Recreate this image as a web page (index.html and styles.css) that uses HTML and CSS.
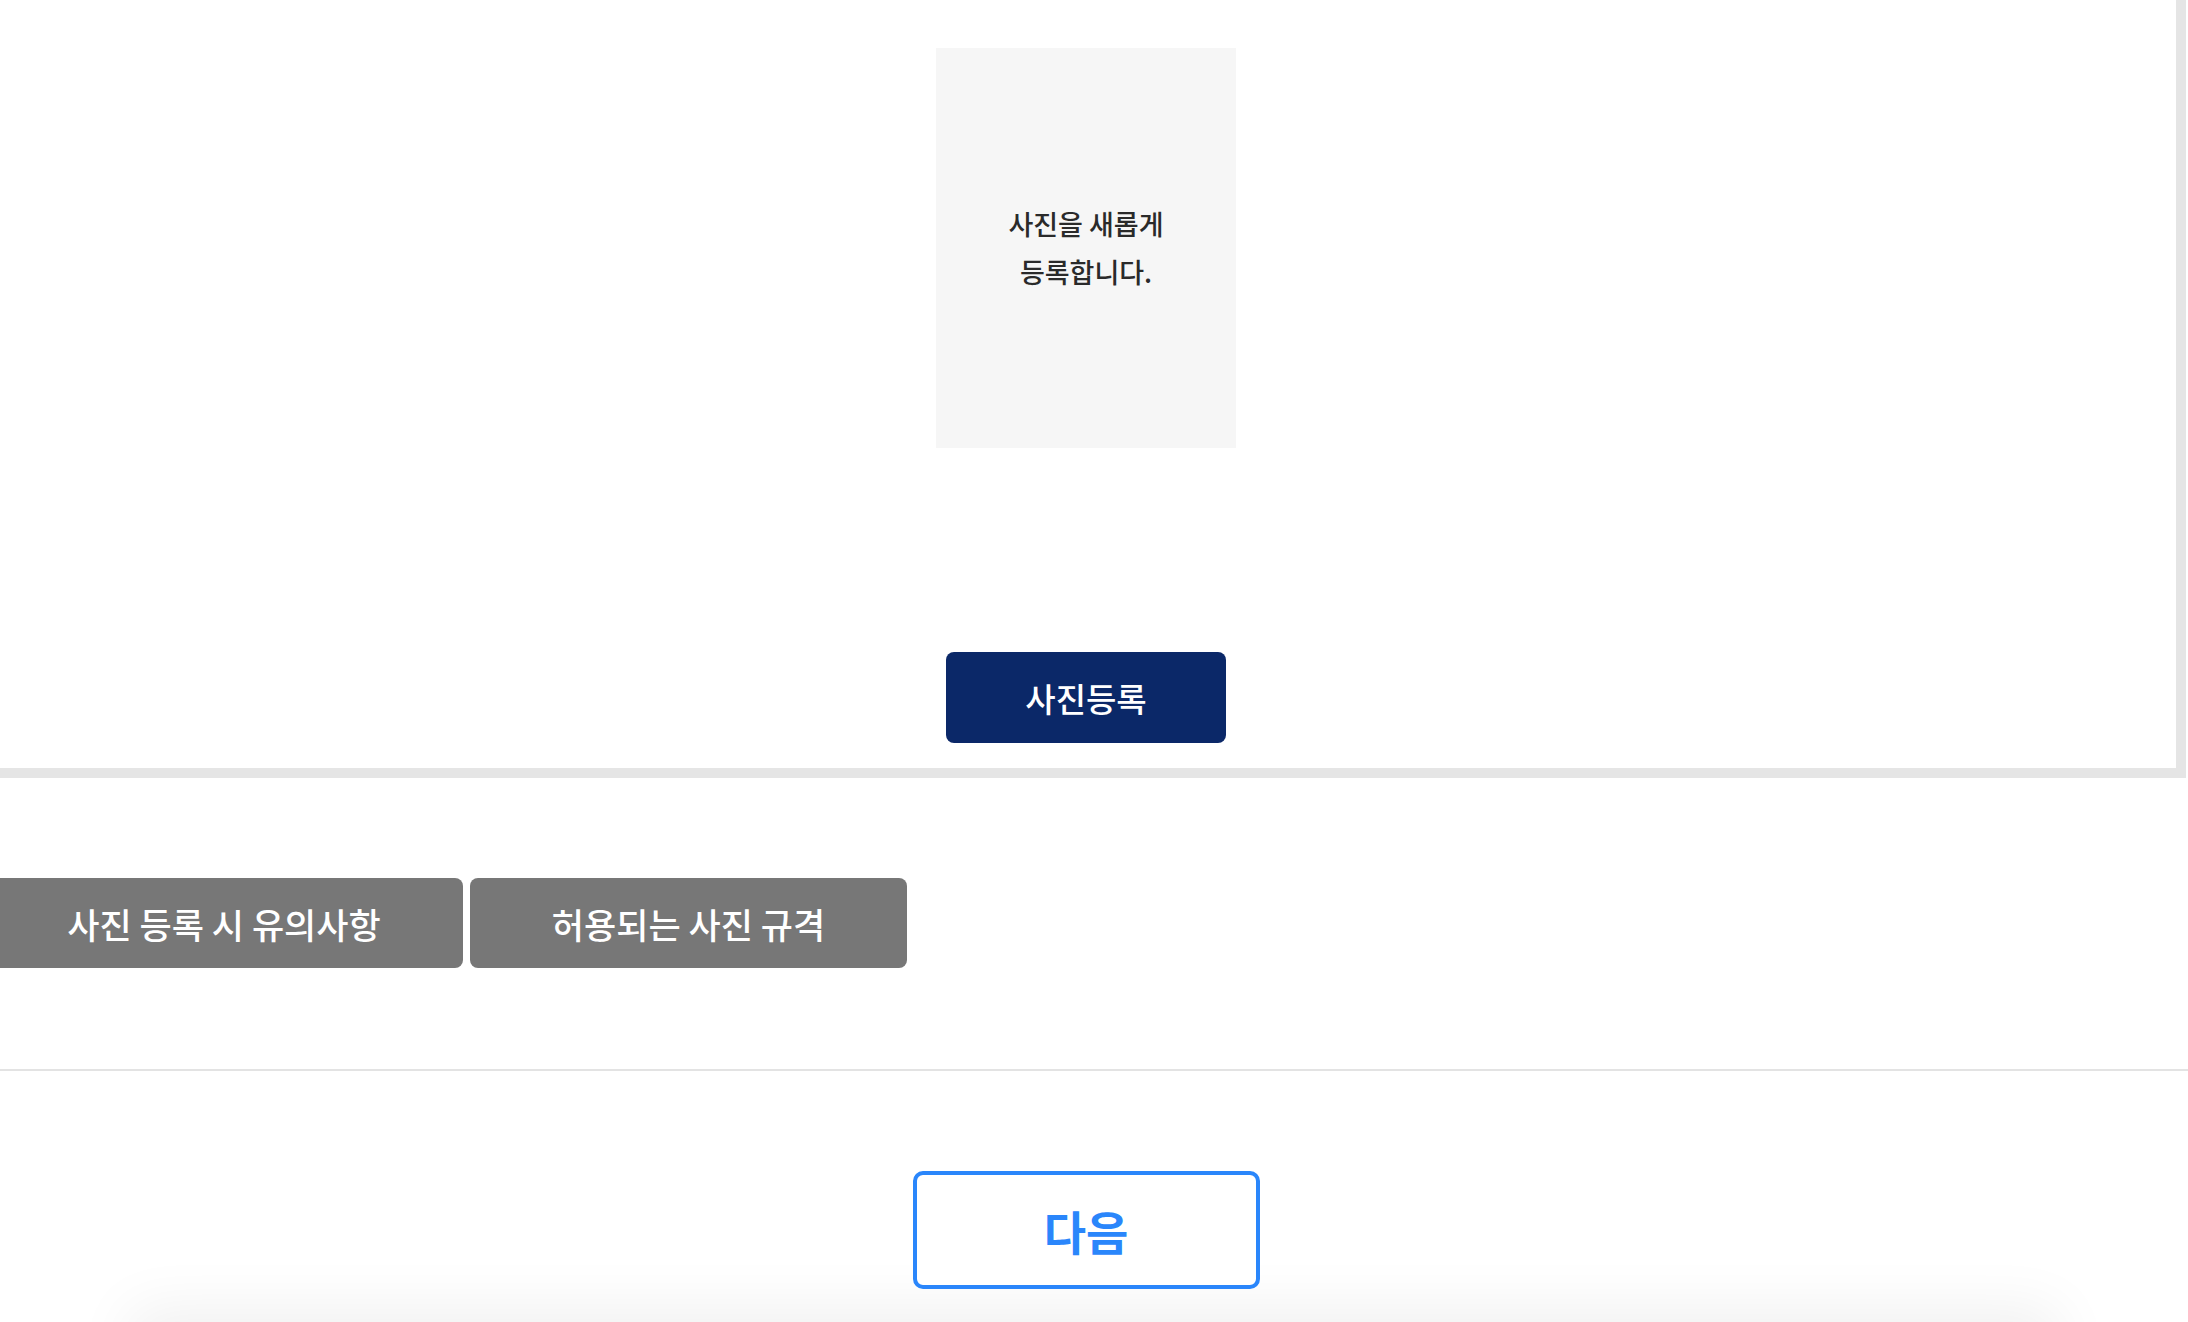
FILE: index.html
```html
<!DOCTYPE html>
<html>
<head>
    <title>사진등록</title>
    <link rel="stylesheet" href="styles.css">
</head>
<body>
    <div id="photo_container">
        <div class="photo_box">
            <p>사진을 새롭게<br>등록합니다.</p>
        </div>
        <button class="register-btn">사진등록</button>
    </div>

    <!-- Guide buttons -->
    <div class="guide_div">
        <button class="guide-btn wide">사진 등록 시 유의사항</button>
        <button class="guide-btn">허용되는 사진 규격</button>
    </div>

    <hr class="divider">

    <div class="next_div">
        <button class="next-btn">다음</button>
    </div>

    <div class="bottom_bar"></div>
</body>
</html>
```

FILE: styles.css
```css
/* General page styling */
html {
    overflow: hidden;
}

body {
    margin: 0;
    font-family: 'Noto Sans CJK KR', 'Noto Sans', sans-serif;
    background-color: white;
}

button {
    font-family: inherit;
    cursor: pointer;
}

/* Upper box with photo */
#photo_container {
    margin-left: -4px;
    width: 2180px;
    padding-top: 48px;
    padding-bottom: 25px;
    border-right: 10px solid #e5e5e5;
    border-bottom: 10px solid #e5e5e5;
    display: flex;
    flex-direction: column;
    align-items: center;
}

.photo_box {
    width: 300px;
    height: 400px;
    background-color: #f6f6f6;
    display: flex;
    align-items: center;
    justify-content: center;
    text-align: center;
}

.photo_box p {
    margin: 0;
    font-size: 27px;
    font-weight: 500;
    line-height: 48px;
    color: #2a2a2a;
}

.register-btn {
    margin-top: 204px;
    width: 280px;
    height: 91px;
    border: none;
    border-radius: 8px;
    background-color: #0b2868;
    color: white;
    font-size: 33px;
    font-weight: 500;
}

/* Guide buttons */
.guide_div {
    margin-top: 100px;
    margin-left: -15px;
    display: flex;
    gap: 7px;
}

.guide-btn {
    height: 90px;
    width: 437px;
    border: none;
    border-radius: 8px;
    background-color: #777777;
    color: white;
    font-size: 35px;
    font-weight: 500;
    padding: 0;
}

.guide-btn.wide {
    width: 478px;
}

.divider {
    margin: 101px 0 0 0;
    border: none;
    border-top: 2px solid #e3e3e3;
}

/* Next button */
.next_div {
    margin-top: 100px;
    display: flex;
    justify-content: center;
    padding-right: 16px;
}

.next-btn {
    width: 347px;
    height: 118px;
    border: 4px solid #2a86fb;
    border-radius: 10px;
    background-color: white;
    color: #2a86fb;
    font-size: 46px;
    font-weight: 700;
}

.bottom_bar {
    margin: 40px 150px 0 150px;
    height: 60px;
    background-color: #f0f0f0;
    box-shadow: 0 0 60px 20px #f0f0f0;
}
```
